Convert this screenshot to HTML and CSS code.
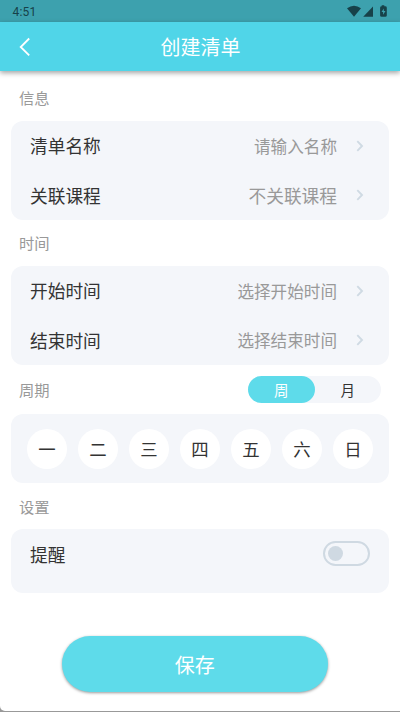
FILE: index.html
```html
<!DOCTYPE html>
<html lang="zh-CN">
<head>
<meta charset="utf-8">
<title>创建清单</title>
<link rel="stylesheet" href="styles.css">
</head>
<body>
<div class="screen">
  <div class="status">
    <span>4:51</span>
    <svg class="status-icons" width="42" height="14" viewBox="0 0 42 14">
      <path d="M0 3.3Q7-1.9 14 3.3L7 11.7Z"/>
      <path d="M26 1.6V11.7H16.2Z"/>
      <path fill-rule="evenodd" d="M34.7 1.3V.2H37.3V1.3H38.2Q39.8 1.3 39.8 2.7V10.4Q39.8 11.7 38.2 11.7H34.7Q33.1 11.7 33.1 10.4V2.7Q33.1 1.3 34.7 1.3ZM36.8 3.5L34.5 7H36.1V9.8L38.5 6H36.8Z"/>
    </svg>
  </div>
  <header class="header">
    <svg class="back" width="12" height="20" viewBox="0 0 12 20"><path d="M10.2 1.5L1.7 10L10.2 18.3"/></svg>
    <h1>创建清单</h1>
  </header>
  <main>
    <h2 class="first">信息</h2>
    <section class="card">
      <div class="row"><span class="label">清单名称</span><span class="value">请输入名称</span><svg class="chevron" width="8" height="12" viewBox="0 0 8 12"><path d="M1.3 1.2L6 6L1.3 10.8"/></svg></div>
      <div class="row"><span class="label">关联课程</span><span class="value large">不关联课程</span><svg class="chevron" width="8" height="12" viewBox="0 0 8 12"><path d="M1.3 1.2L6 6L1.3 10.8"/></svg></div>
    </section>
    <h2>时间</h2>
    <section class="card">
      <div class="row"><span class="label">开始时间</span><span class="value">选择开始时间</span><svg class="chevron" width="8" height="12" viewBox="0 0 8 12"><path d="M1.3 1.2L6 6L1.3 10.8"/></svg></div>
      <div class="row"><span class="label">结束时间</span><span class="value">选择结束时间</span><svg class="chevron" width="8" height="12" viewBox="0 0 8 12"><path d="M1.3 1.2L6 6L1.3 10.8"/></svg></div>
    </section>
    <div class="cycle">
      <h2>周期</h2>
      <div class="segment"><span class="active">周</span><span>月</span></div>
    </div>
    <section class="card days"><span>一</span><span>二</span><span>三</span><span>四</span><span>五</span><span>六</span><span>日</span></section>
    <h2 class="settings">设置</h2>
    <section class="card reminder"><span class="label">提醒</span><span class="toggle"><i></i></span></section>
    <button class="save">保存</button>
  </main>
</div>
</body>
</html>
```
FILE: styles.css
```css
* { box-sizing: border-box; }
body {
  margin: 0;
  background: #999;
  font-family: "Noto Sans CJK SC", sans-serif;
  color: #333;
}
.screen {
  height: 711px;
  overflow: hidden;
  background: #fff;
  border-radius: 0 0 0 5px;
}
.status {
  height: 22px;
  display: flex;
  align-items: center;
  justify-content: space-between;
  padding: 1px 12px 0 12.5px;
  background: #3da1ae;
  color: #174149;
  font: 400 12px/20px Roboto, sans-serif;
  letter-spacing: .2px;
}
.status-icons { fill: #174149; margin-right: -1px; }
.header {
  display: flex;
  align-items: center;
  height: 49px;
  padding-left: 19px;
  background: #50d5e8;
  box-shadow: 0 2px 5px rgba(0, 0, 0, .36);
  color: #fff;
}
.back { fill: none; stroke: #fff; stroke-width: 1.8; }
h1 {
  margin: 0 0 0 129.5px;
  font-size: 20px;
  font-weight: 400;
  line-height: 30px;
}
main { padding: 0 11px; }
h2 {
  height: 46px;
  margin: 0;
  padding-left: 8px;
  color: #999;
  font-size: 15.3px;
  font-weight: 400;
  line-height: 44px;
}
h2.first { height: 50px; line-height: 53px; }
.card { background: #f4f6fa; border-radius: 12px; }
.row {
  display: flex;
  align-items: center;
  height: 49px;
  padding: 0 25px 0 19px;
}
.row + .row { height: 50px; }
.row:first-child .label { margin-top: -1px; }
.label { font-size: 17.7px; line-height: 26px; }
.value { margin-left: auto; color: #999; font-size: 16.6px; line-height: 26px; }
.large { font-size: 17.7px; }
.chevron { margin-left: 19px; fill: none; stroke: #cfdae3; stroke-width: 1.9; }
.cycle {
  display: flex;
  align-items: center;
  justify-content: space-between;
  height: 49px;
  padding-right: 8px;
}
.segment {
  display: flex;
  width: 133px;
  height: 27px;
  background: #f4f6fa;
  border-radius: 14px;
  font-size: 14.5px;
  line-height: 27px;
  text-align: center;
}
.segment span { flex: 1; }
.segment .active { background: #5edbea; color: #fff; border-radius: 14px; }
.days {
  display: flex;
  align-items: center;
  justify-content: space-between;
  height: 69px;
  padding: 0 16px;
}
.days span {
  width: 40px;
  height: 40px;
  border-radius: 50%;
  background: #fff;
  font-size: 17.4px;
  line-height: 40px;
  text-align: center;
}
h2.settings { line-height: 47px; }
.reminder {
  display: flex;
  align-items: flex-start;
  justify-content: space-between;
  height: 64px;
  padding: 12px 19px 0;
}
.toggle {
  width: 47px;
  height: 25px;
  padding: 3px;
  border: 2px solid #cfd9e2;
  border-radius: 13px;
}
.toggle i {
  display: block;
  width: 15px;
  height: 15px;
  border-radius: 50%;
  background: #cfd9e2;
}
.save {
  display: block;
  width: 266.5px;
  height: 55.5px;
  margin: 43px 0 0 50.5px;
  padding: 2px 0 0;
  border: 0;
  border-radius: 28px;
  background: #5edbea;
  box-shadow: 0 1px 3px rgba(0, 0, 0, .4);
  color: #fff;
  font: 400 20px/30px "Noto Sans CJK SC", sans-serif;
}
```
